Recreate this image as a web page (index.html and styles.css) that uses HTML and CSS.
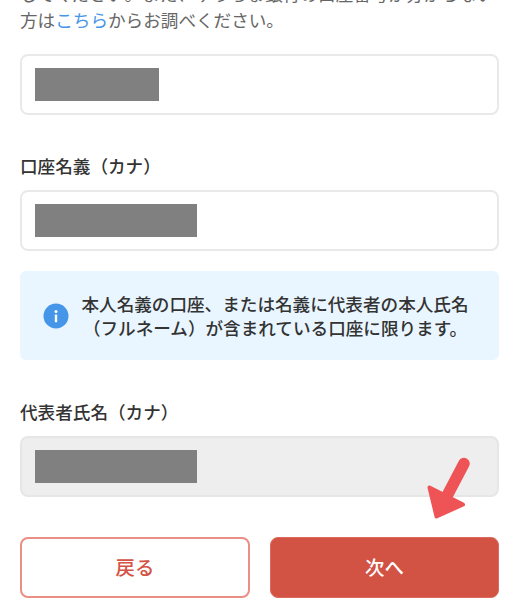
FILE: index.html
```html
<!DOCTYPE html>
<html lang="ja">
<head>
<meta charset="utf-8">
<title>口座情報</title>
<link rel="stylesheet" href="styles.css">
</head>
<body>
<main class="page">
  <p class="lead">してください。また、ゆうちょ銀行の口座番号が分からない<br>方は<a class="link" href="#">こちら</a>からお調べください。</p>
  <div class="field field-first"><span class="mask mask-short"></span></div>

  <h2 class="label label-holder">口座名義（カナ）</h2>
  <div class="field"><span class="mask"></span></div>

  <div class="notice">
    <svg class="notice-icon" viewBox="0 0 26 26" aria-hidden="true">
      <circle cx="13" cy="13" r="12.5" fill="#4596e8"/>
      <rect x="11.8" y="11.6" width="2.4" height="7.6" rx="0.6" fill="#fff"/>
      <circle cx="13" cy="8.6" r="1.5" fill="#fff"/>
    </svg>
    <p class="notice-text">本人名義の口座、または名義に代表者の本人氏名<br>（フルネーム）が含まれている口座に限ります。</p>
  </div>

  <h2 class="label label-rep">代表者氏名（カナ）</h2>
  <div class="field field-disabled"><span class="mask"></span></div>

  <div class="actions">
    <button class="btn btn-back" type="button">戻る</button>
    <button class="btn btn-next" type="button">次へ</button>
  </div>

  <svg class="arrow" viewBox="0 0 60 70" aria-hidden="true">
    <path d="M38 7.5 L22 38" stroke="#ee5455" stroke-width="11.5" stroke-linecap="round" fill="none"/>
    <path d="M3.5 31.5 L10.5 60.5 L37 48.5 Z" fill="#ee5455" stroke="#ee5455" stroke-width="4" stroke-linejoin="round"/>
  </svg>
</main>
</body>
</html>
```
FILE: styles.css
```css
* { box-sizing: border-box; }
html, body { margin: 0; height: 100%; background: #fff; overflow: hidden; }
body { font-family: "Noto Sans CJK JP", "Noto Sans", sans-serif; color: #333; }

.page { position: relative; width: 519px; height: 609px; padding: 0 20px; overflow: hidden; }

.lead {
  margin: -19px 0 0;
  font-size: 17.6px;
  line-height: 26px;
  white-space: nowrap;
  color: #666;
}
.link { color: #4596e8; text-decoration: none; }

.field {
  height: 61px;
  padding: 12px 13px;
  background: #fff;
  border: 2px solid #e9e9e9;
  border-radius: 8px;
}
.field-first { margin-top: 21px; }
.field-disabled { background: #eee; border-color: #e6e6e6; }

.mask { display: block; width: 162px; height: 33px; background: #808080; }
.mask-short { width: 124px; }

.label { margin: 0; font-size: 17.6px; line-height: 24px; font-weight: 500; color: #333; }
.label-holder { margin-top: 39px; margin-bottom: 12px; }
.label-rep { margin-top: 40px; margin-bottom: 12px; }

.notice {
  display: flex;
  align-items: center;
  gap: 12px;
  height: 89px;
  margin-top: 20px;
  padding: 0 30px 0 23px;
  background: #e9f6ff;
  border-radius: 6px;
}
.notice-icon { flex: none; width: 26px; height: 26px; }
.notice-text {
  margin: 0;
  flex: 1;
  font-size: 17.6px;
  line-height: 23.5px;
  font-weight: 500;
  text-align: center;
  white-space: nowrap;
  color: #333;
}

.actions { display: grid; grid-template-columns: 230px 229px; gap: 20px; margin-top: 40px; }
.btn {
  height: 61px;
  padding: 0 0 2px;
  border-radius: 8px;
  font-family: inherit;
  font-size: 19.4px;
  font-weight: 500;
}
.btn-back { background: #fff; border: 2px solid #ea8f85; color: #d45345; }
.btn-next { background: #d25244; border: 1px solid #dc6a5e; color: #fff; }

.arrow { position: absolute; left: 426px; top: 456px; width: 60px; height: 70px; }
```
